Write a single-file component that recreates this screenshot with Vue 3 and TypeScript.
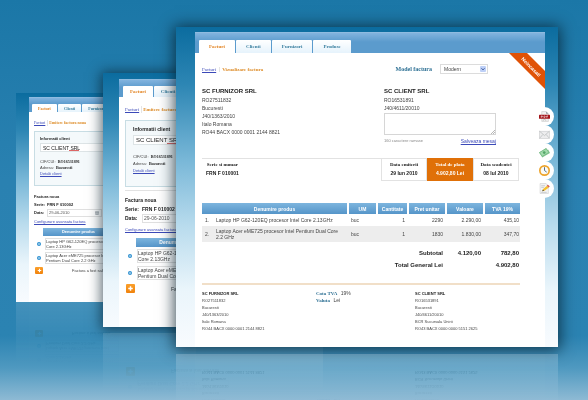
<script setup lang="ts">
import { ref } from 'vue'

interface Product {
  name: string
  unit: string
  quantity: number
  price: string
  value: string
  vat: string
}

interface Draft {
  size: string
  tabCount: number
}

const tabs: string[] = ['Facturi', 'Clienti', 'Furnizori', 'Produse']
const drafts: Draft[] = [
  { size: 'far', tabCount: 3 },
  { size: 'mid', tabCount: 2 },
]

const products: Product[] = [
  { name: 'Laptop HP G62-120EQ procesor Intel Core 2.13GHz', unit: 'buc', quantity: 1, price: '2290', value: '2.290,00', vat: '435,10' },
  { name: 'Laptop Acer eME725 procesor Intel Pentium Dual Core 2.2 GHz', unit: 'buc', quantity: 1, price: '1830', value: '1.830,00', vat: '347,70' },
]

const supplier: string[] = ['RO27511832', 'Bucuresti', 'J40/1363/2010', 'Italo Romana', 'RO44 BACX 0000 0001 2144 8821']
const client: string[] = ['RO16531891', 'J40/4611/20010']
const clientFull: string[] = ['RO16531891', 'Bucuresti', 'J40/4611/20010', 'BCR Sucursala Unirii', 'RO43 BACX 0000 0000 5151 2625']

const model = ref('Modern')
const message = ref('')
</script>

<template>
  <main class="stage">
    <section v-for="{ size, tabCount } in drafts" :key="size" class="window draft" :class="size">
      <div class="frame">
        <div class="sheet">
          <nav class="tabs">
            <a v-for="(tab, i) in tabs.slice(0, tabCount)" :key="tab" href="#" class="tab" :class="{ active: i === 0 }">{{ tab }}</a>
          </nav>
          <div class="draft-body">
            <div class="crumbs"><a href="#">Facturi</a><b>Emitere factura noua</b></div>
            <div class="panel">
              <label class="heading" :for="size + '-client'">Informatii client</label>
              <input :id="size + '-client'" class="client-input" value="SC CLIENT SRL" />
              <div class="info">
                <p>CIF/CUI: <b>RO16531891</b></p>
                <p>Adresa: <b>Bucuresti</b></p>
                <a href="#">Detalii client</a>
              </div>
            </div>
            <div class="meta">
              <p class="heading">Factura noua</p>
              <p class="field"><b class="key">Serie:</b><b>FRN F 010002</b></p>
              <div class="field">
                <label class="key" :for="size + '-date'">Data:</label>
                <span class="date">
                  <input :id="size + '-date'" value="29-06-2010" />
                  <svg viewBox="0 0 8 8"><path d="M1 1h6v6H1zM1 3h6M3 3v4M5 3v4" fill="#fff" stroke="#8a9299" /></svg>
                </span>
              </div>
            </div>
            <a class="advanced" href="#">Configurare avansata factura</a>
            <div class="lines">
              <div class="lines-head">Denumire produs</div>
              <div v-for="product in products" :key="product.name" class="line">
                <button class="remove" aria-label="Sterge produs">
                  <svg viewBox="0 0 10 10"><circle cx="5" cy="5" r="5" fill="#2c8fd0" /><path d="M2.5 5h5" stroke="#fff" stroke-width="2" /></svg>
                </button>
                <textarea aria-label="Produs" :value="product.name"></textarea>
              </div>
            </div>
            <div class="add-row">
              <button class="add" aria-label="Adauga produs">
                <svg viewBox="0 0 10 10"><path d="M5 2.5v5M2.5 5h5" stroke="#fff" stroke-width="1.6" /></svg>
              </button>
              <span>Factura a fost salvata</span>
            </div>
          </div>
        </div>
      </div>
    </section>

    <section class="window front">
      <div class="frame">
        <div class="sheet">
          <nav class="tabs">
            <a v-for="(tab, i) in tabs" :key="tab" href="#" class="tab" :class="{ active: i === 0 }">{{ tab }}</a>
          </nav>
          <div class="ribbon"><span>Neincasat!</span></div>
          <div class="body">
            <div class="toolbar">
              <div class="crumbs"><a href="#">Facturi</a><b>Vizualizare factura</b></div>
              <div class="model">
                <label for="model">Model factura</label>
                <span class="select">
                  <select id="model" v-model="model"><option>Modern</option></select>
                  <svg viewBox="0 0 6 6"><rect width="6" height="6" rx="1" fill="#bed0f7" /><path d="M1.5 2.3 3 3.9l1.500-1.600" fill="none" stroke="#3c5a9a" /></svg>
                </span>
              </div>
            </div>

            <div class="parties">
              <div>
                <h2>SC FURNIZOR SRL</h2>
                <p v-for="row in supplier" :key="row">{{ row }}</p>
              </div>
              <div class="client">
                <h2>SC CLIENT SRL</h2>
                <p v-for="row in client" :key="row">{{ row }}</p>
                <div class="note">
                  <textarea v-model="message" aria-label="Mesaj"></textarea>
                  <svg viewBox="0 0 4 4"><path d="M0 4 4 0M2 4l2-2" stroke="#999" stroke-width=".7" /></svg>
                </div>
                <div class="note-foot"><span>160 caractere ramase</span><a href="#">Salveaza mesaj</a></div>
              </div>
            </div>

            <div class="summary">
              <div class="series"><div><span>Serie si numar</span><b>FRN F 010001</b></div></div>
              <div class="box"><span>Data emiterii</span><b>29 Iun 2010</b></div>
              <div class="box total"><span>Total de plata</span><b>4.902,80 Lei</b></div>
              <div class="box"><span>Data scadentei</span><b>08 Iul 2010</b></div>
            </div>

            <table>
              <colgroup><col class="c-no" /><col /><col class="c-um" /><col class="c-qty" /><col class="c-num" /><col class="c-num" /><col class="c-vat" /></colgroup>
              <thead>
                <tr><th colspan="2">Denumire produs</th><th>UM</th><th>Cantitate</th><th>Pret unitar</th><th>Valoare</th><th>TVA 19%</th></tr>
              </thead>
              <tbody>
                <tr v-for="(product, i) in products" :key="product.name">
                  <td>{{ i + 1 }}.</td>
                  <td class="name">{{ product.name }}</td>
                  <td>{{ product.unit }}</td>
                  <td class="num">{{ product.quantity }}</td>
                  <td class="num">{{ product.price }}</td>
                  <td class="num">{{ product.value }}</td>
                  <td class="num last">{{ product.vat }}</td>
                </tr>
              </tbody>
              <tfoot>
                <tr class="subtotal"><td colspan="5">Subtotal</td><td>4.120,00</td><td class="last">782,80</td></tr>
                <tr><td colspan="5">Total General Lei</td><td></td><td class="last">4.902,80</td></tr>
              </tfoot>
            </table>

            <footer>
              <div><h3>SC FURNIZOR SRL</h3><p v-for="row in supplier" :key="row">{{ row }}</p></div>
              <div class="terms"><p><b>Cota TVA</b> 19%</p><p><b>Valuta</b> Lei</p></div>
              <div><h3>SC CLIENT SRL</h3><p v-for="row in clientFull" :key="row">{{ row }}</p></div>
            </footer>
          </div>

          <div class="actions">
            <button aria-label="PDF">
              <svg viewBox="0 0 20 20"><path d="M5 1h8l4 4v14H5z" fill="#f1f1f1" stroke="#c4c4c4" /><path d="M13 1v4h4" fill="#8f969c" /><rect y="7" width="20" height="7" rx="1" fill="#a31318" /><path d="M4 12V9h2v2H4M9 9h1.500l1 1.500-1 1.500H9zM14 12V9h2.500M14 10.500h2" fill="none" stroke="#fff" /><path d="M7 17q3-3 6 0" fill="none" stroke="#999" /></svg>
            </button>
            <button aria-label="Trimite email">
              <svg viewBox="0 0 20 20"><rect x="1" y="4" width="18" height="13" fill="#ededee" stroke="#c4c6c8" /><path d="m1 4 9 8 9-8M1 17l6-7m12 7-6-7" fill="none" stroke="#bfc2c4" stroke-width="1.500" /></svg>
            </button>
            <button aria-label="Incaseaza">
              <svg viewBox="0 0 20 20"><path d="m0 10 13-8 2 3 2 0 3 6-14 8z" fill="#8ac996" /><path d="m1 10 12-7 5 7-12 7z" fill="#a4dbad" stroke="#63ad73" /><circle cx="9.500" cy="10" r="2.500" fill="#55a668" /></svg>
            </button>
            <button aria-label="Scadenta">
              <svg viewBox="0 0 20 20"><circle cx="10" cy="10" r="8.500" fill="#fbfaf5" stroke="#eda42b" stroke-width="3" /><path d="M10 4v6l4 3" fill="none" stroke="#55708a" stroke-width="1.800" /></svg>
            </button>
            <button aria-label="Editeaza">
              <svg viewBox="0 0 20 20"><path d="M2 1h11l4 4v14H2z" fill="#f4f4f4" stroke="#c9c9c9" /><path d="M4 5h7M4 8h5M4 17h10" stroke="#a9adb2" /><path d="m6 15 1.500-4 7-6 3.500 3-8 6z" fill="#f5c02f" /><path d="m14 5 2-2 3.500 3L18 8z" fill="#d85a50" /><path d="m6 15 1-3 2 2z" fill="#333" /></svg>
            </button>
          </div>
        </div>
      </div>
    </section>
  </main>
</template>

<style>
body {
  margin: 0;
}
</style>

<style scoped>
.stage {
  position: relative;
  min-height: 100vh;
  overflow: hidden;
  background: linear-gradient(#1b77a7 0, #2a81b1 45%, #2b83b2 84%, #4f99c0 92%, #8ebad4 100%);
  font-family: "Liberation Sans", Arial, sans-serif;
  font-size: 5px;
  color: #444;
}
.stage * {
  box-sizing: border-box;
}
p,
h2,
h3 {
  margin: 0;
}
a {
  color: #3b49b8;
}
input,
textarea,
select,
button {
  display: block;
  margin: 0;
  padding: 0;
  border: 0;
  border-radius: 0;
  font: inherit;
  color: inherit;
  background: none;
}
textarea {
  resize: none;
  overflow: hidden;
}
svg {
  display: block;
}

/* windows */
.window {
  position: absolute;
}
.frame {
  background: linear-gradient(#0b6c9f 0, #2d86b4 18%, #7ab8d8 42%, #b8dbed 62%, #eaf5fb 82%, #f8fbfe 100%);
}
.sheet {
  position: relative;
  background: #fff;
}
.front {
  left: 176px;
  top: 27px;
  width: 382px;
  box-shadow: 0 1px 14px 2px rgba(4, 28, 42, 0.75);
}
.front .frame {
  padding: 5px 13px 0 19px;
  -webkit-box-reflect: below 7px linear-gradient(transparent 84%, rgba(0, 0, 0, 0.22));
}
.far {
  left: 16px;
  top: 93px;
  width: 180px;
}
.mid {
  left: 103px;
  top: 73px;
  width: 220px;
  box-shadow: 0 1px 12px 2px rgba(4, 28, 42, 0.65);
}

/* tabs */
.tabs {
  display: flex;
  align-items: flex-end;
  gap: 1px;
  height: 21px;
  padding-left: 4px;
  background: linear-gradient(#82b3de, #5b9bcd 45%, #5b9bcd);
  border-top: 1px solid #8fbbe0;
}
.tab {
  padding: 0 9px;
  height: 13px;
  line-height: 13px;
  border-radius: 1px 1px 0 0;
  background: linear-gradient(#fff, #e6f3fc);
  font-family: "Liberation Serif", serif;
  font-weight: bold;
  color: #3a7f9f;
  text-decoration: none;
}
.front .tab {
  min-width: 35px;
  padding: 0 10px;
  text-align: center;
}
.tab.active {
  background: #fff;
  color: #e2821f;
}
.crumbs {
  display: flex;
  gap: 3px;
  font-family: "Liberation Serif", serif;
}
.crumbs b {
  padding-left: 2px;
  border-left: 1px solid #e4e4e4;
  color: #dd8b26;
}

/* front window */
.body {
  padding: 11px 25px 15px 7px;
}
.toolbar {
  display: flex;
  justify-content: space-between;
  align-items: center;
  height: 10px;
  padding-right: 32px;
}
.model {
  display: flex;
  align-items: center;
  gap: 8px;
}
.model label {
  font-family: "Liberation Serif", serif;
  font-weight: bold;
  font-size: 6px;
  color: #2c6f93;
}
.select {
  position: relative;
}
.select select {
  width: 48px;
  height: 10px;
  padding-left: 3px;
  border: 1px solid #dcdcdc;
  appearance: none;
}
.select svg {
  position: absolute;
  right: 2px;
  top: 2px;
  width: 6px;
  height: 6px;
  pointer-events: none;
}
.ribbon {
  position: absolute;
  top: 21px;
  right: 0;
  display: flex;
  justify-content: center;
  align-items: center;
  width: 36px;
  height: 36px;
  background: #e05206;
  clip-path: polygon(0 0, 50% 0, 100% 50%, 100% 100%);
}
.ribbon span {
  padding-bottom: 13px;
  font-weight: bold;
  line-height: 6px;
  color: #fff;
  transform: rotate(45deg);
}
.parties {
  display: grid;
  grid-template-columns: 182px 1fr;
  margin-top: 13px;
  line-height: 8px;
}
.client {
  padding-right: 24px;
}
h2 {
  font-size: 6px;
  line-height: 9px;
  color: #222;
}
.note {
  position: relative;
  margin-top: 1px;
}
.note textarea {
  width: 100%;
  height: 22px;
  border: 1px solid #d6d6d6;
}
.note svg {
  position: absolute;
  right: 1px;
  bottom: 1px;
  width: 4px;
  height: 4px;
}
.note-foot {
  display: flex;
  justify-content: space-between;
  margin-top: 2px;
  font-size: 4px;
  color: #888;
}
.note-foot a {
  font-size: 5px;
}
.summary {
  display: flex;
  height: 23px;
  margin-top: 13px;
  padding-right: 1px;
  line-height: 8px;
  text-align: center;
  color: #222;
}
.summary span,
.summary b {
  display: block;
}
.summary span {
  font-family: "Liberation Serif", serif;
  font-weight: bold;
}
.series {
  flex: 1;
  display: flex;
  padding: 2px 4px;
  border-top: 1px solid #e2e2e2;
}
.box {
  width: 46px;
  padding-top: 2px;
  border: 1px solid #e2e2e2;
}
.box.total {
  border-color: #e07008;
  background: #e07008;
  color: #fff;
}
table {
  width: 100%;
  margin-top: 22px;
  border-collapse: collapse;
  table-layout: fixed;
  line-height: 6px;
}
.c-no {
  width: 13px;
}
.c-um {
  width: 29px;
}
.c-qty {
  width: 31px;
}
.c-num {
  width: 38px;
}
.c-vat {
  width: 36px;
}
th {
  height: 11px;
  padding: 0;
  color: #fff;
  background: linear-gradient(#7db5de, #5595c9);
}
th + th {
  border-left: 2px solid #fff;
}
td {
  height: 12px;
  padding: 0 3px;
}
td.name {
  padding: 0 8px 0 1px;
}
tbody tr:nth-child(2) td {
  height: 16px;
  background: #ededed;
}
.num,
tfoot td {
  text-align: right;
}
td.last {
  padding-right: 1px;
}
tfoot td {
  font-size: 6px;
  font-weight: bold;
  color: #222;
}
.subtotal td {
  height: 17px;
  padding-top: 5px;
}
footer {
  display: grid;
  grid-template-columns: 114px 99px 1fr;
  margin-top: 12px;
  padding-top: 5px;
  border-top: 2px solid #f1dfc8;
  font-size: 4px;
  line-height: 7px;
}
h3 {
  font-size: 4px;
  line-height: 7px;
  color: #222;
}
.terms {
  font-size: 5px;
}
.terms b {
  margin-right: 2px;
  font-family: "Liberation Serif", serif;
  color: #2c6f93;
}
.actions {
  position: absolute;
  top: 75px;
  right: -9px;
}
.actions button {
  display: flex;
  justify-content: center;
  align-items: center;
  width: 19px;
  height: 19px;
  padding-right: 1px;
  border-radius: 50%;
  background: #fff;
}
.actions button + button {
  margin-top: -1px;
}
.actions svg {
  width: 11px;
  height: 11px;
}

/* draft windows */
.far {
  --gap-tabs: 8px;
  --small: 4px;
  --field: 5px;
  --row: 6px;
  --meta: 8px;
}
.mid {
  --gap-tabs: 9px;
  --small: 5px;
  --field: 6px;
  --row: 7px;
  --meta: 9px;
}
.draft {
  font-size: var(--small);
}
.far .frame {
  padding: 4px 0 0 13px;
  -webkit-box-reflect: below 0 linear-gradient(transparent 70%, rgba(0, 0, 0, 0.12));
}
.mid .frame {
  padding: 6px 0 0 16px;
  -webkit-box-reflect: below 6px linear-gradient(transparent 76%, rgba(0, 0, 0, 0.12));
}
.far .tabs {
  height: 15px;
  padding-left: 3px;
}
.mid .tabs {
  height: 18px;
}
.far .tab {
  height: 8px;
  padding: 0 6px;
  line-height: 9px;
}
.mid .tab {
  height: 11px;
  padding: 0 7px;
  line-height: 12px;
}
.draft-body {
  padding: var(--gap-tabs) 6px 0;
}
.far .draft-body {
  padding-bottom: 28px;
  padding-left: 5px;
}
.mid .draft-body {
  padding-bottom: 34px;
}
.draft .crumbs {
  gap: 2px;
  line-height: var(--row);
}
.draft .crumbs b {
  padding-left: 1px;
}
.heading {
  display: block;
  font-weight: bold;
  color: #222;
}
.panel {
  margin-top: 5px;
  padding: 4px 0 8px 5px;
  border: 1px solid #c8dde4;
  background: #f4f9fb;
  line-height: var(--row);
}
.mid .panel {
  margin-top: 7px;
  padding: 4px 0 12px 7px;
}
.mid .panel .heading {
  line-height: 8px;
}
.client-input {
  width: 100%;
  height: 9px;
  margin-top: 1px;
  padding-left: 2px;
  border: 1px solid #dde4e6;
  background: linear-gradient(#d66, #d66) 28px 6px / 10px 1px no-repeat #fff;
  font-size: var(--field);
  color: #222;
}
.mid .client-input {
  height: 10px;
  margin-top: 2px;
  background-position: 33px 7px;
  background-size: 12px 1px;
}
.info {
  margin-top: 7px;
  font-size: 4px;
}
.mid .info {
  margin-top: 8px;
}
.info a {
  display: block;
}
.info b {
  margin-left: 1px;
  font-family: "Liberation Serif", serif;
  color: #222;
}
.meta {
  margin-top: 7px;
  line-height: var(--meta);
  color: #222;
}
.mid .meta {
  margin-top: 3px;
  padding-top: 5px;
  border-top: 1px solid #e2e2e2;
}
.field {
  display: flex;
}
.key {
  width: 13px;
  font-weight: bold;
}
.mid .key {
  width: 17px;
}
.date {
  display: flex;
  align-items: center;
  justify-content: space-between;
  width: 55px;
  height: var(--meta);
  padding: 0 2px 0 1px;
  border: 1px solid #e0e0e0;
  color: #555;
}
.date input {
  width: 40px;
  height: 6px;
}
.date svg {
  width: 4px;
  height: 4px;
}
.advanced {
  display: block;
  margin-top: 1px;
  font-size: 4px;
  line-height: 8px;
}
.mid .advanced {
  margin-top: 3px;
}
.lines {
  margin-top: 2px;
}
.mid .lines {
  margin-top: 4px;
}
.lines-head {
  width: 71px;
  margin-left: 9px;
  line-height: 8px;
  font-weight: bold;
  text-align: center;
  color: #fff;
  background: linear-gradient(#7db5de, #5595c9);
}
.mid .lines-head {
  width: 88px;
  margin-left: 11px;
  line-height: 9px;
}
.line {
  display: flex;
  align-items: center;
  gap: 4px;
  margin-top: 2px;
  padding-left: 3px;
}
.mid .line {
  gap: 5px;
}
.mid .line + .line {
  margin-top: 3px;
}
.remove svg {
  width: 4px;
  height: 4px;
}
.line textarea {
  width: 74px;
  height: 12px;
  border: 1px solid #e0e0e0;
  line-height: 5px;
}
.mid .line textarea {
  width: 92px;
  height: 14px;
  line-height: 6px;
}
.add-row {
  display: flex;
  align-items: center;
  gap: 29px;
  margin-top: 3px;
  padding-left: 1px;
}
.mid .add-row {
  gap: 36px;
  margin-top: 4px;
}
.add {
  display: flex;
  justify-content: center;
  width: 8px;
  border-radius: 1px;
  background: linear-gradient(#fba02c, #f0820c);
}
.add svg {
  width: 7px;
  height: 7px;
}
.mid .add {
  width: 9px;
}
.mid .add svg {
  width: 9px;
  height: 9px;
}
</style>
